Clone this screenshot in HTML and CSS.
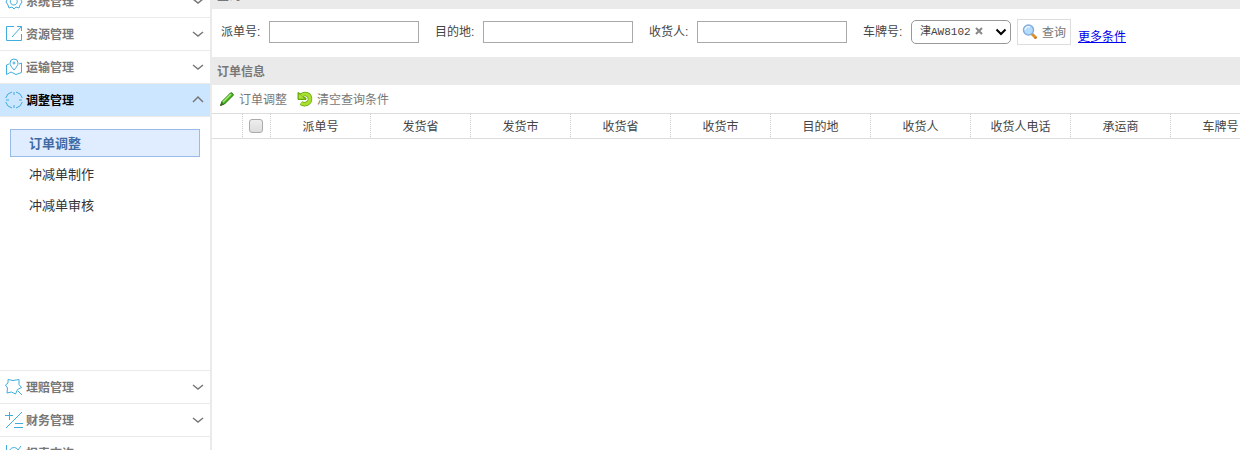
FILE: index.html
```html
<!DOCTYPE html>
<html lang="zh-CN">
<head>
<meta charset="utf-8">
<title>订单调整</title>
<link rel="stylesheet" href="styles.css">
</head>
<body>
<div class="app">
  <nav class="sidebar">
    <button class="group" type="button">
      <svg class="group-icon" viewBox="0 0 18 18"><path d="M6 2h6l1 2 3 1v3l1 2-2 3-1 3-3-1-2 2-2-2-3 1-1-3-2-3 1-2V5l3-1zM9 6a3.500 3.500 0 1 0 2 .8M9 5v3"/></svg>
      <span>系统管理</span>
      <svg class="chevron" viewBox="0 0 12 12"><path d="M1 4l5 4 5-4"/></svg>
    </button>
    <button class="group" type="button">
      <svg class="group-icon" viewBox="0 0 18 18"><path d="M9 1.500H1.500v14h15V9M12 1.500h4.500V6M16.500 1.500L7 12"/></svg>
      <span>资源管理</span>
      <svg class="chevron" viewBox="0 0 12 12"><path d="M1 4l5 4 5-4"/></svg>
    </button>
    <button class="group" type="button">
      <svg class="group-icon" viewBox="0 0 18 18"><path d="M4 6L1.500 7v9.500L6 14l5 2.500 5.500-2V5L14 6M9 12C6 8.500 5 7 5 5a4 4 0 0 1 8 0c0 2-1 3.500-4 7z"/><circle cx="9" cy="5" r="1"/></svg>
      <span>运输管理</span>
      <svg class="chevron" viewBox="0 0 12 12"><path d="M1 4l5 4 5-4"/></svg>
    </button>
    <button class="group active" type="button" aria-expanded="true">
      <svg class="group-icon" viewBox="0 0 18 18"><path d="M7 1A8.300 8.300 0 0 0 .7 7M.7 11A8.300 8.300 0 0 0 7 17M11 17a8.300 8.300 0 0 0 6.300-6M17.300 7A8.300 8.300 0 0 0 11 1M9 1v3M9 14v3M1 9h3M14 9h3"/></svg>
      <span>调整管理</span>
      <svg class="chevron" viewBox="0 0 12 12"><path d="M1 8l5-5 5 5"/></svg>
    </button>
    <div class="submenu">
      <a class="subitem selected" href="#">订单调整</a>
      <a class="subitem" href="#">冲减单制作</a>
      <a class="subitem" href="#">冲减单审核</a>
    </div>
    <button class="group" type="button">
      <svg class="group-icon" viewBox="0 0 18 18"><path d="M3 1.500l5 1 6-1v5l2.500 3-4 2-2 4.500-4-2-4.500 1 .5-5L.500 7 3 5zM13 13l4 4"/></svg>
      <span>理赔管理</span>
      <svg class="chevron" viewBox="0 0 12 12"><path d="M1 4l5 4 5-4"/></svg>
    </button>
    <button class="group" type="button">
      <svg class="group-icon" viewBox="0 0 18 18"><path d="M0 4.500h8M4.500 1v8M17 1L1 17M10 12.500h8M9 16.500h9"/></svg>
      <span>财务管理</span>
      <svg class="chevron" viewBox="0 0 12 12"><path d="M1 4l5 4 5-4"/></svg>
    </button>
    <button class="group" type="button">
      <svg class="group-icon" viewBox="0 0 18 18"><path d="M1.500 1v15.500H17M4 8c1-5 7-6 9-2l3-4M5 13l4-4 3 2 4-5"/></svg>
      <span>报表查询</span>
      <svg class="chevron" viewBox="0 0 12 12"><path d="M1 4l5 4 5-4"/></svg>
    </button>
  </nav>

  <main class="content">
    <h2 class="bar">查询</h2>
    <form class="search">
      <div class="field"><label for="order">派单号:</label><input id="order" class="text" type="text"></div>
      <div class="field"><label for="dest">目的地:</label><input id="dest" class="text" type="text"></div>
      <div class="field"><label for="receiver">收货人:</label><input id="receiver" class="text" type="text"></div>
      <div class="field">
        <label for="plate">车牌号:</label>
        <div class="combo">
          <select id="plate"><option>津AW8102</option></select>
          <button class="clear" type="button" aria-label="清除"><svg viewBox="0 0 8 8"><path d="M1 1l6 6M7 1L1 7"/></svg></button>
          <svg class="arrow" viewBox="0 0 12 8"><path d="M1.500 1.500L6 6l4.500-4.500"/></svg>
        </div>
      </div>
      <div class="actions">
        <button class="query" type="submit">
          <svg class="tool-icon" viewBox="0 0 16 16"><path d="M9.500 9.500l4 4" stroke="#df912c" stroke-width="3" stroke-linecap="round"/><path d="M13 14.500l1.500-1.500" stroke="#96591d"/><circle cx="6.500" cy="6" r="5" fill="#b4dcff" stroke="#86aed8" stroke-width="1.500"/><path d="M3 6a3.500 3.500 0 0 1 5-3" fill="none" stroke="#e8f6ff" stroke-width="1.500"/></svg>
          <span>查询</span>
        </button>
        <a class="more" href="#">更多条件</a>
      </div>
    </form>
    <h2 class="bar">订单信息</h2>
    <div class="toolbar">
      <button class="tool" type="button">
        <svg class="tool-icon" viewBox="0 0 16 16"><path d="M1.500 14.500l1.500-4L11.500 2c1-1 3.500 1 2.500 2.500L5.500 13z" fill="#49b51f" stroke="#23720d"/><path d="M4 11l8-8" stroke="#a5ed72" stroke-width="1.500"/><path d="M1 15l1.500-3.500 2 2z" fill="#4d5d30"/></svg>
        <span>订单调整</span>
      </button>
      <button class="tool" type="button">
        <svg class="tool-icon" viewBox="0 0 16 16"><path d="M4.500 4.500C8 1.500 13 3.500 13 8s-5.500 6.500-9 4" fill="none" stroke="#6aa90f" stroke-width="4.500"/><path d="M1 1.500V8.500h8V7L6 6 4 3z" fill="#7fbd16" stroke="#6aa90f"/><path d="M4.500 4.500C8 1.500 13 3.500 13 8s-5.500 6.500-9 4" fill="none" stroke="#a8df30" stroke-width="3"/><path d="M2 3v4.500h5z" fill="#b0e23c"/></svg>
        <span>清空查询条件</span>
      </button>
    </div>
    <table class="grid">
      <thead>
        <tr>
          <th class="num"></th>
          <th class="check"><input type="checkbox" aria-label="全选"></th>
          <th>派单号</th><th>发货省</th><th>发货市</th><th>收货省</th><th>收货市</th>
          <th>目的地</th><th>收货人</th><th>收货人电话</th><th>承运商</th><th>车牌号</th>
        </tr>
      </thead>
    </table>
  </main>
</div>
</body>
</html>
```

FILE: styles.css
```css
* { box-sizing: border-box; }

body {
  margin: 0;
  height: 100vh;
  overflow: hidden;
  background: #fff;
  color: #444;
  font: 12px/16px "Liberation Sans", "Noto Sans CJK SC", sans-serif;
}

button, input, select { font: inherit; color: inherit; }
button { margin: 0; padding: 0; border: 0; background: none; }

.app { display: flex; height: 100vh; overflow: hidden; }

/* Sidebar, scrolled slightly past its first group */
.sidebar {
  display: flex;
  flex: none;
  flex-direction: column;
  width: 212px;
  height: calc(100vh + 35px);
  margin-top: -15px;
  border-right: 2px solid #eaeaea;
}

.group {
  display: flex;
  flex: none;
  align-items: center;
  gap: 3px;
  height: 33px;
  padding: 0 6px 0 5px;
  border-bottom: 1px solid #eaeaea;
  color: #777;
  font-weight: bold;
  text-align: left;
}
.group span, .tool span, .query span { padding-top: 2px; }
.group.active { background: #cce6ff; color: #000; }

.group-icon {
  width: 18px;
  height: 18px;
  fill: none;
  stroke: #40addd;
  stroke-width: 1;
}
.chevron {
  width: 12px;
  height: 12px;
  margin-left: auto;
  fill: none;
  stroke: #777;
  stroke-width: 1.5;
}

.submenu {
  display: flex;
  flex: 1;
  flex-direction: column;
  gap: 3px;
  padding: 12px 10px;
  border-bottom: 1px solid #eaeaea;
}
.subitem {
  padding: 6px 18px 4px;
  border: 1px solid transparent;
  color: #333;
  font-size: 13px;
  text-decoration: none;
}
.subitem.selected {
  border-color: #99bbe8;
  background: #e0ecff;
  color: #416aa3;
  font-weight: bold;
}

/* Main area */
.content { flex: 1; min-width: 0; margin-top: -19px; overflow: hidden; }

.bar {
  margin: 0;
  padding: 7px 5px 5px;
  background: #eaeaea;
  color: #777;
  font-size: 12px;
  font-weight: bold;
}

.search {
  display: flex;
  align-items: center;
  gap: 16px;
  height: 48px;
  padding: 0 9px 2px;
}
.field { display: flex; align-items: center; }
.field label { width: 48px; }
.text {
  width: 150px;
  height: 22px;
  border: 1px solid #a9a9a9;
  background: #fff;
}

.combo { position: relative; }
.combo select {
  display: block;
  width: 100px;
  height: 24px;
  padding: 0 8px;
  border: 1px solid #999;
  border-radius: 5px;
  appearance: none;
  background: #fff;
  font-family: "Liberation Mono", "Noto Sans CJK SC", monospace;
  font-size: 11px;
}
.clear { position: absolute; top: 7px; right: 28px; width: 8px; height: 8px; }
.clear svg { display: block; fill: none; stroke: #888; stroke-width: 2; }
.arrow {
  position: absolute;
  top: 8px;
  right: 4px;
  width: 12px;
  height: 8px;
  fill: none;
  stroke: #000;
  stroke-width: 2;
  pointer-events: none;
}

.actions { display: flex; align-items: center; gap: 7px; margin-left: -10px; }
.query {
  display: flex;
  align-items: center;
  gap: 4px;
  height: 26px;
  padding: 0 4px;
  border: 1px solid #ddd;
  color: #777;
}
.more { padding-top: 10px; color: #00e; text-decoration: underline; }

.toolbar { display: flex; gap: 10px; height: 28px; padding: 0 7px; }
.tool { display: flex; align-items: center; gap: 4px; color: #777; }
.tool-icon { width: 16px; height: 16px; fill: none; }

.grid {
  width: 1059px;
  border-collapse: separate;
  border-spacing: 0;
  table-layout: fixed;
}
.grid th {
  width: 100px;
  height: 26px;
  padding: 2px 0 0;
  border: solid #ddd;
  border-width: 1px 0;
  border-right: 1px dotted #ccc;
  font-weight: normal;
  white-space: nowrap;
}
.grid .num { width: 31px; }
.grid .check { width: 28px; padding: 0; }
.check input {
  display: block;
  width: 14px;
  height: 14px;
  margin: 0 6px;
  border: 1px solid #aaa;
  border-radius: 3px;
  appearance: none;
  background: linear-gradient(#eee, #ddd);
}
```
